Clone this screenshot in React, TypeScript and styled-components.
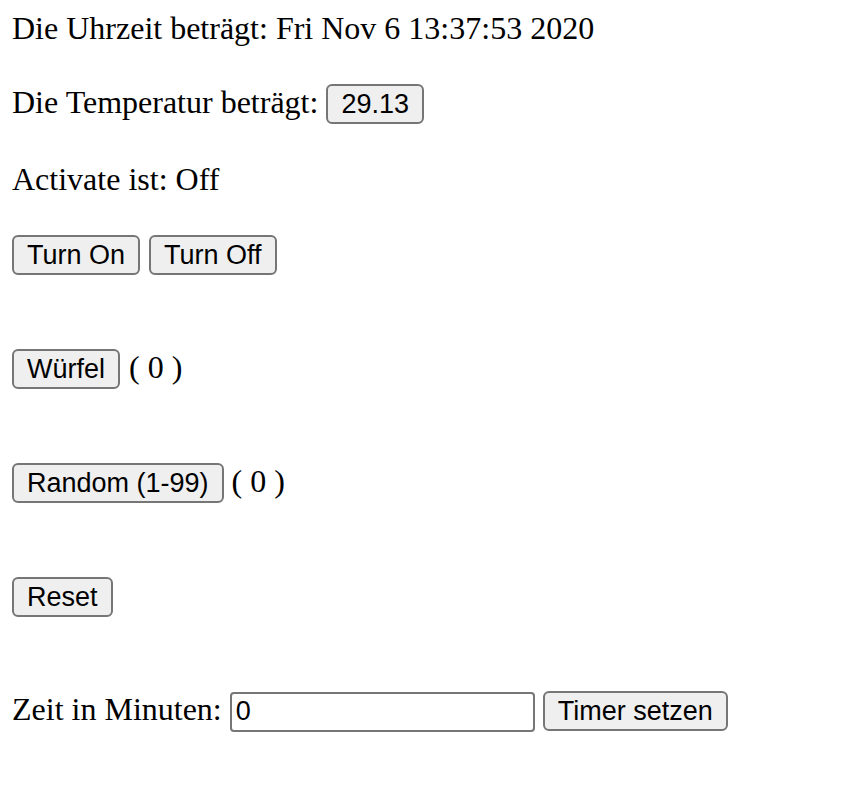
import React from "react";
import styled, { createGlobalStyle } from "styled-components";

const Global = createGlobalStyle`
  html, body {
    margin: 0;
    padding: 0;
    background: #ffffff;
  }
  body {
    font-family: "Liberation Serif", "Times New Roman", serif;
    color: #000000;
  }
`;

const Page = styled.div`
  display: flex;
  flex-direction: column;
  padding: 10px 0 0 12px;
`;

const Section = styled.div<{ $gap: number }>`
  display: flex;
  flex-direction: column;
  gap: ${(p) => p.$gap}px;
`;

const Row = styled.div<{ $gap?: number }>`
  display: flex;
  align-items: baseline;
  gap: ${(p) => p.$gap ?? 9}px;
  font-family: "Liberation Serif", "Times New Roman", serif;
  font-size: 32px;
  line-height: 37px;
  white-space: nowrap;
`;

const Button = styled.button`
  box-sizing: border-box;
  height: 40px;
  font-family: "Liberation Sans", Arial, sans-serif;
  font-size: 27px;
  line-height: 32px;
  color: #000000;
  background: #efefef;
  border: 2px solid #767676;
  border-radius: 6px;
  padding: 2px 13px;
  margin: 0;
  cursor: pointer;
`;

const TextInput = styled.input`
  box-sizing: border-box;
  width: 305px;
  height: 40px;
  font-family: "Liberation Sans", Arial, sans-serif;
  font-size: 27px;
  line-height: 32px;
  color: #000000;
  background: #ffffff;
  border: 2px solid #767676;
  border-radius: 4px;
  padding: 2px 4px;
  margin: 0;
  outline: none;
`;

export default function App() {
  return (
    <>
      <Global />
      <Page>
        <Section $gap={37}>
          <Row>Die Uhrzeit beträgt: Fri Nov 6 13:37:53 2020</Row>
          <Row $gap={8}>
            Die Temperatur beträgt:
            <Button>29.13</Button>
          </Row>
          <Row>Activate ist: Off</Row>
          <Section $gap={74}>
            <Row>
              <Button>Turn On</Button>
              <Button>Turn Off</Button>
            </Row>
            <Row>
              <Button>Würfel</Button>( 0 )
            </Row>
            <Row $gap={8}>
              <Button>Random (1-99)</Button>( 0 )
            </Row>
            <Row>
              <Button>Reset</Button>
            </Row>
            <Row $gap={8}>
              Zeit in Minuten:
              <TextInput type="text" defaultValue="0" />
              <Button>Timer setzen</Button>
            </Row>
          </Section>
        </Section>
      </Page>
    </>
  );
}
